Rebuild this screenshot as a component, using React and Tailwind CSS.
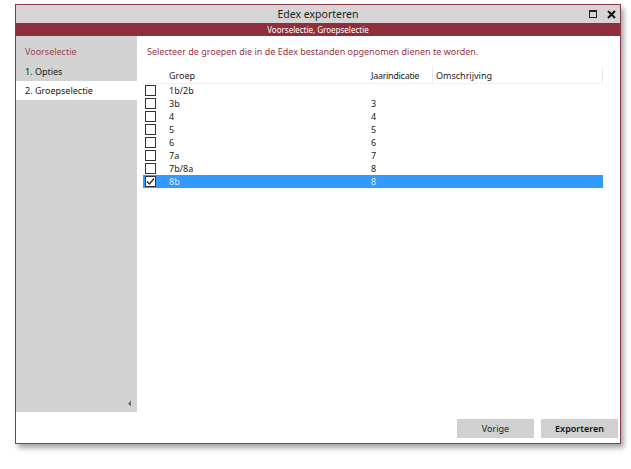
import React from 'react';

const rows = [
	{ groep: '1b/2b', jaar: '' },
	{ groep: '3b', jaar: '3' },
	{ groep: '4', jaar: '4' },
	{ groep: '5', jaar: '5' },
	{ groep: '6', jaar: '6' },
	{ groep: '7a', jaar: '7' },
	{ groep: '7b/8a', jaar: '8' },
	{ groep: '8b', jaar: '8', selected: true },
];

function CheckBox({ checked }) {
	return (
		<div className="w-[11px] h-[11px] border border-[#333] bg-white flex items-center justify-center">
			{checked && (
				<svg width="9" height="9" viewBox="0 0 9 9">
					<path d="M1 4.5 L3.5 7 L8 1.5" fill="none" stroke="#222" strokeWidth="1.2" />
				</svg>
			)}
		</div>
	);
}

export default function App() {
	return (
		<div className="w-[631px] h-[469px] bg-white pt-[4px] pl-[15px]" style={{ fontFamily: '"Noto Sans", "Open Sans", sans-serif' }}>
			<div className="w-[606px] h-[440px] border border-[#8a3a46] bg-white flex flex-col shadow-[3px_4px_5px_rgba(0,0,0,0.35)]">
				{/* title bar */}
				<div className="h-[18px] bg-[#d5d5d5] flex items-center relative">
					<div className="flex-1 text-center text-[10.5px] text-[#222] leading-none">Edex exporteren</div>
					<div className="absolute right-[4px] top-0 h-full flex items-center gap-[10px]">
						<div className="w-[8px] h-[8px] border border-[#222] border-t-[2px]" />
						<svg width="9" height="9" viewBox="0 0 9 9">
							<path d="M1 1 L8 8 M8 1 L1 8" stroke="#111" strokeWidth="2" />
						</svg>
					</div>
				</div>
				<div className="h-[13px] bg-[#8f2f3d] flex items-center justify-center text-[8px] text-white leading-none">
					Voorselectie, Groepselectie
				</div>

				<div className="h-[376px] flex">
					{/* sidebar */}
					<div className="w-[121px] shrink-0 bg-[#d3d3d3] flex flex-col relative">
						<div className="h-[7px]" />
						<div className="pl-[9px] h-[18px] flex items-center text-[9px] text-[#a3404f]">Voorselectie</div>
						<div className="pl-[9px] h-[16px] mt-[3px] flex items-center text-[9px] text-[#222]">1. Opties</div>
						<div className="pl-[9px] h-[19px] mt-[1px] flex items-center text-[9px] text-[#222] bg-white">2. Groepselectie</div>
						<svg className="absolute left-[111px] bottom-[5px]" width="5" height="7" viewBox="0 0 5 7">
							<path d="M4 0.5 L1 3.5 L4 6.5 Z" fill="#666" />
						</svg>
					</div>

					{/* content */}
					<div className="flex-1 flex flex-col pl-[6px]">
						<div className="h-[7px]" />
						<div className="h-[18px] flex items-center pl-[4px] text-[9px] text-[#9a3443]">
							Selecteer de groepen die in de Edex bestanden opgenomen dienen te worden.
						</div>
						<div className="w-[460px] mt-[7px]">
							<div className="h-[16px] flex items-center text-[9px] text-[#222] border-b border-[#f0f0f0]">
								<div className="w-[26px] shrink-0" />
								<div className="w-[202px] shrink-0 h-full flex items-center">Groep</div>
								<div className="w-[61px] shrink-0 h-full flex items-center tracking-[-0.3px]">Jaarindicatie</div>
								<div className="flex-1 pl-[3px] h-full flex items-center border-l border-[#e8e8e8] border-r">Omschrijving</div>
							</div>
							{rows.map((r) => (
								<div
									key={r.groep}
									className={`h-[13px] flex items-center text-[9px] leading-none ${r.selected ? 'bg-[#3399ff] text-[#d8ecff]' : 'text-[#222]'}`}
								>
									<div className="w-[26px] shrink-0 pl-[2px] flex items-center">
										<CheckBox checked={r.selected} />
									</div>
									<div className="w-[202px] shrink-0">{r.groep}</div>
									<div className="w-[61px] shrink-0">{r.jaar}</div>
									<div className="flex-1" />
								</div>
							))}
						</div>
					</div>
				</div>

				{/* footer */}
				<div className="flex-1 flex justify-end items-start pt-[7px] pr-[2px] gap-[7px]">
					<button className="w-[77px] h-[19px] bg-[#d0d0d0] text-[9px] text-[#222]">Vorige</button>
					<button className="w-[77px] h-[19px] bg-[#d0d0d0] text-[9px] text-[#111] font-semibold">Exporteren</button>
				</div>
			</div>
		</div>
	);
}
